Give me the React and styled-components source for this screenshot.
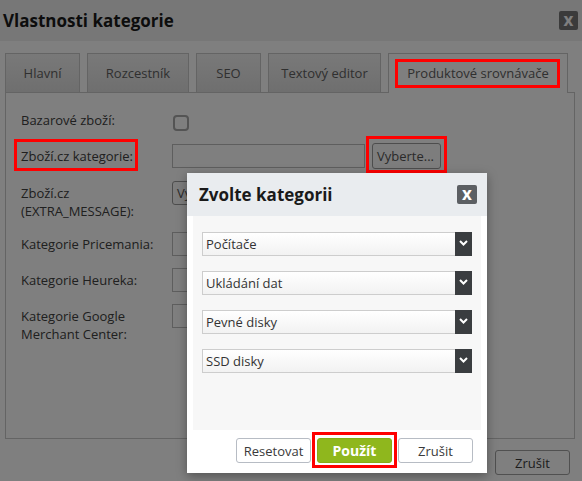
import React from "react";
import styled, { createGlobalStyle } from "styled-components";

const Global = createGlobalStyle`
  html, body { margin: 0; padding: 0; }
  body { font-family: "Open Sans", "Liberation Sans", sans-serif; font-size: 13px; color: #333; }
  * { box-sizing: border-box; }
`;

const Page = styled.div`
  position: relative;
  width: 582px;
  height: 481px;
  overflow: hidden;
  background: #fff;
`;

const Header = styled.div`
  height: 41px;
  background: #efefef;
  display: flex;
  align-items: center;
  justify-content: space-between;
  padding: 0 4px 0 3px;
`;

const Title = styled.h1`
  margin: 0;
  font-size: 17px;
  font-weight: 700;
  color: #1a1a1a;
  line-height: 24px;
`;

const CloseBtn = styled.button`
  width: ${(p) => p.$w || 19}px;
  height: 19px;
  padding: 0 0 2px;
  border: none;
  border-radius: 2px;
  background: ${(p) => p.$bg || "#767676"};
  color: #fff;
  font-family: "Open Sans", sans-serif;
  font-weight: 700;
  font-size: 17px;
  line-height: 1;
  display: flex;
  align-items: center;
  justify-content: center;
`;

const Body = styled.div`
  padding: 12px 7px 0 5px;
`;

const TabBar = styled.div`
  display: flex;
  gap: 7px;
  align-items: flex-start;
`;

const Tab = styled.div`
  width: ${(p) => p.$w}px;
  height: ${(p) => (p.$active ? 40 : 39)}px;
  margin-bottom: ${(p) => (p.$active ? -1 : 0)}px;
  position: ${(p) => (p.$active ? "relative" : "static")};
  border: 1px solid #c8c8c8;
  border-bottom: none;
  background: ${(p) => (p.$active ? "#fff" : "linear-gradient(#f2f2f2, #dedede)")};
  color: #606060;
  font-size: 13px;
  display: flex;
  align-items: center;
  justify-content: center;
  padding-bottom: ${(p) => (p.$active ? 1 : 0)}px;
`;

const Marked = styled.span`
  position: relative;
  display: ${(p) => (p.$block ? "flex" : "inline-block")};
  &::after {
    content: "";
    position: absolute;
    inset: ${(p) => p.$inset};
    border: 3px solid #ff0000;
    z-index: 15;
    pointer-events: none;
  }
`;

const TabMark = styled.span`
  &::after {
    content: "";
    position: absolute;
    inset: 5px 7px 5px 6px;
    border: 3px solid #ff0000;
    z-index: 15;
    pointer-events: none;
  }
`;

const Panel = styled.div`
  height: 347px;
  border: 1px solid #c8c8c8;
  padding: 15px 15px 0 15px;
  display: flex;
  flex-direction: column;
  gap: 12px;
`;

const Row = styled.div`
  display: flex;
  align-items: flex-start;
  min-height: 24px;
`;

const Label = styled.div`
  width: 151px;
  flex-shrink: 0;
  padding-top: 3px;
  line-height: 18px;
  font-size: 13px;
  color: #404040;
`;

const Checkbox = styled.span`
  display: block;
  width: 16px;
  height: 16px;
  margin-top: 7px;
  margin-left: 1px;
  border: 2px solid #a8a8a8;
  border-radius: 4px;
  background: #fff;
`;

const Field = styled.input`
  width: ${(p) => p.$w || 193}px;
  height: 24px;
  border: 1px solid #bdbdbd;
  background: #fff;
  padding: 0 4px;
  font: inherit;
  outline: none;
`;

const PickButton = styled.button`
  height: ${(p) => p.$h || 26}px;
  width: 69px;
  border: 1px solid #9a9a9a;
  border-radius: 3px;
  background: #fafafa;
  color: #555;
  font-family: "Open Sans", sans-serif;
  font-size: 13px;
  padding: 0 4px;
  text-align: left;
  white-space: nowrap;
  overflow: hidden;
`;

const Footer = styled.div`
  display: flex;
  justify-content: flex-end;
  padding: 11px 5px 0 0;
`;

const Btn = styled.button`
  width: 75px;
  height: 25px;
  border-radius: 3px;
  border: 1px solid ${(p) => (p.$primary ? "#86aa18" : p.$border || "#b7bcc4")};
  background: ${(p) => (p.$primary ? "#8fb71d" : "#fff")};
  color: ${(p) => (p.$primary ? "#fff" : "#3a3a3a")};
  font-family: "Open Sans", sans-serif;
  font-size: ${(p) => (p.$primary ? 14 : 13)}px;
  font-weight: ${(p) => (p.$primary ? 700 : 400)};
  padding: 0;
  display: flex;
  align-items: center;
  justify-content: center;
`;

const Overlay = styled.div`
  position: absolute;
  inset: 0;
  background: rgba(0, 0, 0, 0.5);
  z-index: 10;
`;

const Modal = styled.div`
  position: absolute;
  left: 187px;
  top: 173px;
  width: 300px;
  height: 300px;
  background: #fff;
  z-index: 20;
  box-shadow: 0 3px 10px rgba(0, 0, 0, 0.35);
  display: flex;
  flex-direction: column;
`;

const ModalHeader = styled.div`
  height: 43px;
  flex-shrink: 0;
  background: #e9ecef;
  display: flex;
  align-items: center;
  justify-content: space-between;
  padding: 0 10px 0 12px;
`;

const ModalBody = styled.div`
  height: 214px;
  margin: 0 6px;
  background: #f7f7f7;
  padding: 16px 9px 0;
  display: flex;
  flex-direction: column;
  gap: 15px;
`;

const SelectBox = styled.div`
  height: 24px;
  border: 1px solid #cdcdcd;
  background: linear-gradient(#ffffff, #f2f2f2);
  display: flex;
  align-items: stretch;
`;

const SelectText = styled.span`
  flex: 1;
  padding-left: 3px;
  line-height: 22px;
  font-size: 13px;
  color: #333;
`;

const Arrow = styled.span`
  width: 17px;
  margin: -1px -1px -1px 0;
  background: #3a3d40;
  display: flex;
  align-items: center;
  justify-content: center;
  padding-bottom: 3px;
`;

const ModalFooter = styled.div`
  flex: 1;
  display: flex;
  justify-content: flex-end;
  align-items: flex-start;
  gap: 6px;
  padding: 8px 14px 0 0;
`;

const tabs = [
  { t: "Hlavní", w: 75 },
  { t: "Rozcestník", w: 102 },
  { t: "SEO", w: 65 },
  { t: "Textový editor", w: 113 },
  { t: "Produktové srovnávače", w: 180, active: true },
];

const selects = ["Počítače", "Ukládání dat", "Pevné disky", "SSD disky"];

const Chevron = () => (
  <svg width="9" height="6" viewBox="0 0 9 6">
    <polyline points="1,1 4.5,4.5 8,1" fill="none" stroke="#fff" strokeWidth="2" />
  </svg>
);

export default function App() {
  return (
    <Page>
      <Global />
      <Header>
        <Title>Vlastnosti kategorie</Title>
        <CloseBtn>x</CloseBtn>
      </Header>
      <Body>
        <TabBar>
          {tabs.map((tab) => (
            <Tab key={tab.t} $w={tab.w} $active={tab.active}>
              {tab.active && <TabMark />}
              {tab.t}
            </Tab>
          ))}
        </TabBar>
        <Panel>
          <Row>
            <Label>Bazarové zboží:</Label>
            <Checkbox />
          </Row>
          <Row>
            <Label>
              <Marked $inset="-8px -5px -6px -7px">Zboží.cz kategorie:</Marked>
            </Label>
            <Field />
            <Marked $block $inset="-7px -6px -4px -6px" style={{ marginLeft: 7, marginTop: -1 }}>
              <PickButton>Vyberte...</PickButton>
            </Marked>
          </Row>
          <Row>
            <Label>
              Zboží.cz
              <br />
              (EXTRA_MESSAGE):
            </Label>
            <PickButton $h={24}>Vyberte...</PickButton>
          </Row>
          <Row>
            <Label>Kategorie Pricemania:</Label>
            <Field />
          </Row>
          <Row>
            <Label>Kategorie Heureka:</Label>
            <Field />
          </Row>
          <Row>
            <Label>
              Kategorie Google
              <br />
              Merchant Center:
            </Label>
            <Field />
          </Row>
        </Panel>
        <Footer>
          <Btn $border="#a0a0a0">Zrušit</Btn>
        </Footer>
      </Body>

      <Overlay />

      <Modal>
        <ModalHeader>
          <Title>Zvolte kategorii</Title>
          <CloseBtn $w={20} $bg="#5c5f63">x</CloseBtn>
        </ModalHeader>
        <ModalBody>
          {selects.map((s) => (
            <SelectBox key={s}>
              <SelectText>{s}</SelectText>
              <Arrow>
                <Chevron />
              </Arrow>
            </SelectBox>
          ))}
        </ModalBody>
        <ModalFooter>
          <Btn>Resetovat</Btn>
          <Marked $block $inset="-6px -5px -5px -5px">
            <Btn $primary>Použít</Btn>
          </Marked>
          <Btn>Zrušit</Btn>
        </ModalFooter>
      </Modal>
    </Page>
  );
}
